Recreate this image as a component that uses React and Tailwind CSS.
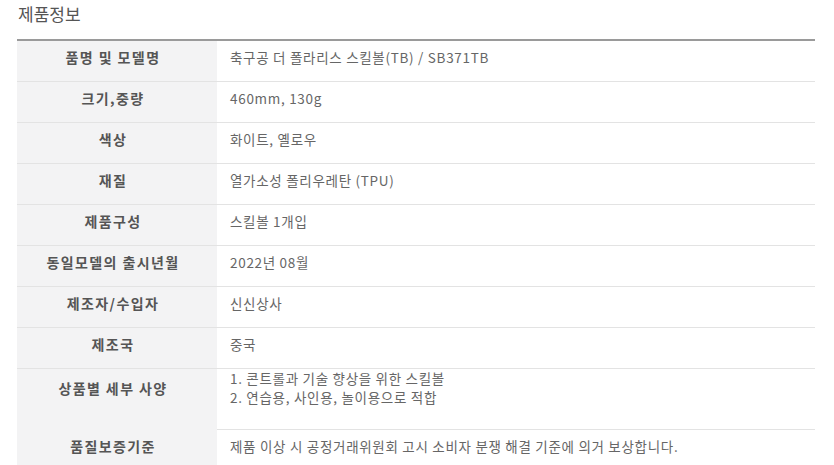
import React from "react";

const rows = [
  { label: "품명 및 모델명", value: ["축구공 더 폴라리스 스킬볼(TB) / SB371TB"] },
  { label: "크기,중량", value: ["460mm, 130g"] },
  { label: "색상", value: ["화이트, 옐로우"] },
  { label: "재질", value: ["열가소성 폴리우레탄 (TPU)"] },
  { label: "제품구성", value: ["스킬볼 1개입"] },
  { label: "동일모델의 출시년월", value: ["2022년 08월"] },
  { label: "제조자/수입자", value: ["신신상사"] },
  { label: "제조국", value: ["중국"] },
  {
    label: "상품별 세부 사양",
    value: ["1. 콘트롤과 기술 향상을 위한 스킬볼", "2. 연습용, 사인용, 놀이용으로 적합"],
    tall: true,
  },
  {
    label: "품질보증기준",
    value: ["제품 이상 시 공정거래위원회 고시 소비자 분쟁 해결 기준에 의거 보상합니다."],
  },
];

const App = () => {
  return (
    <div
      className="w-[834px] h-[465px] overflow-hidden bg-white px-[17px]"
      style={{ fontFamily: '"Noto Sans CJK KR", "Noto Sans", sans-serif' }}
    >
      {/* Title */}
      <div className="h-[39px] pt-[4px] pl-[1px] text-[17px] leading-[20px] text-[#555]">
        제품정보
      </div>

      {/* Spec table */}
      <div className="w-[798px] border-t-2 border-[#9a9a9a]">
        {rows.map((row) => (
          <div
            key={row.label}
            className={`grid grid-cols-[200px_1fr] border-b border-[#e3e3e3] ${
              row.tall ? "h-[61px] pb-[26px]" : "h-[41px] pb-[8px]"
            }`}
          >
            <div
              className={`flex items-center justify-center bg-[#f3f3f4] text-[14px] font-bold tracking-[1.4px] text-[#555] pr-[8px] ${
                row.tall ? "-mb-[26px] pb-[26px]" : "-mb-[8px] pb-[8px]"
              }`}
            >
              {row.label}
            </div>
            <div className="flex flex-col justify-center pl-[13px] text-[13.5px] leading-[19px] tracking-[0.7px] text-[#666]">
              {row.value.map((line) => (
                <div key={line}>{line}</div>
              ))}
            </div>
          </div>
        ))}
      </div>
    </div>
  );
};

export default App;
